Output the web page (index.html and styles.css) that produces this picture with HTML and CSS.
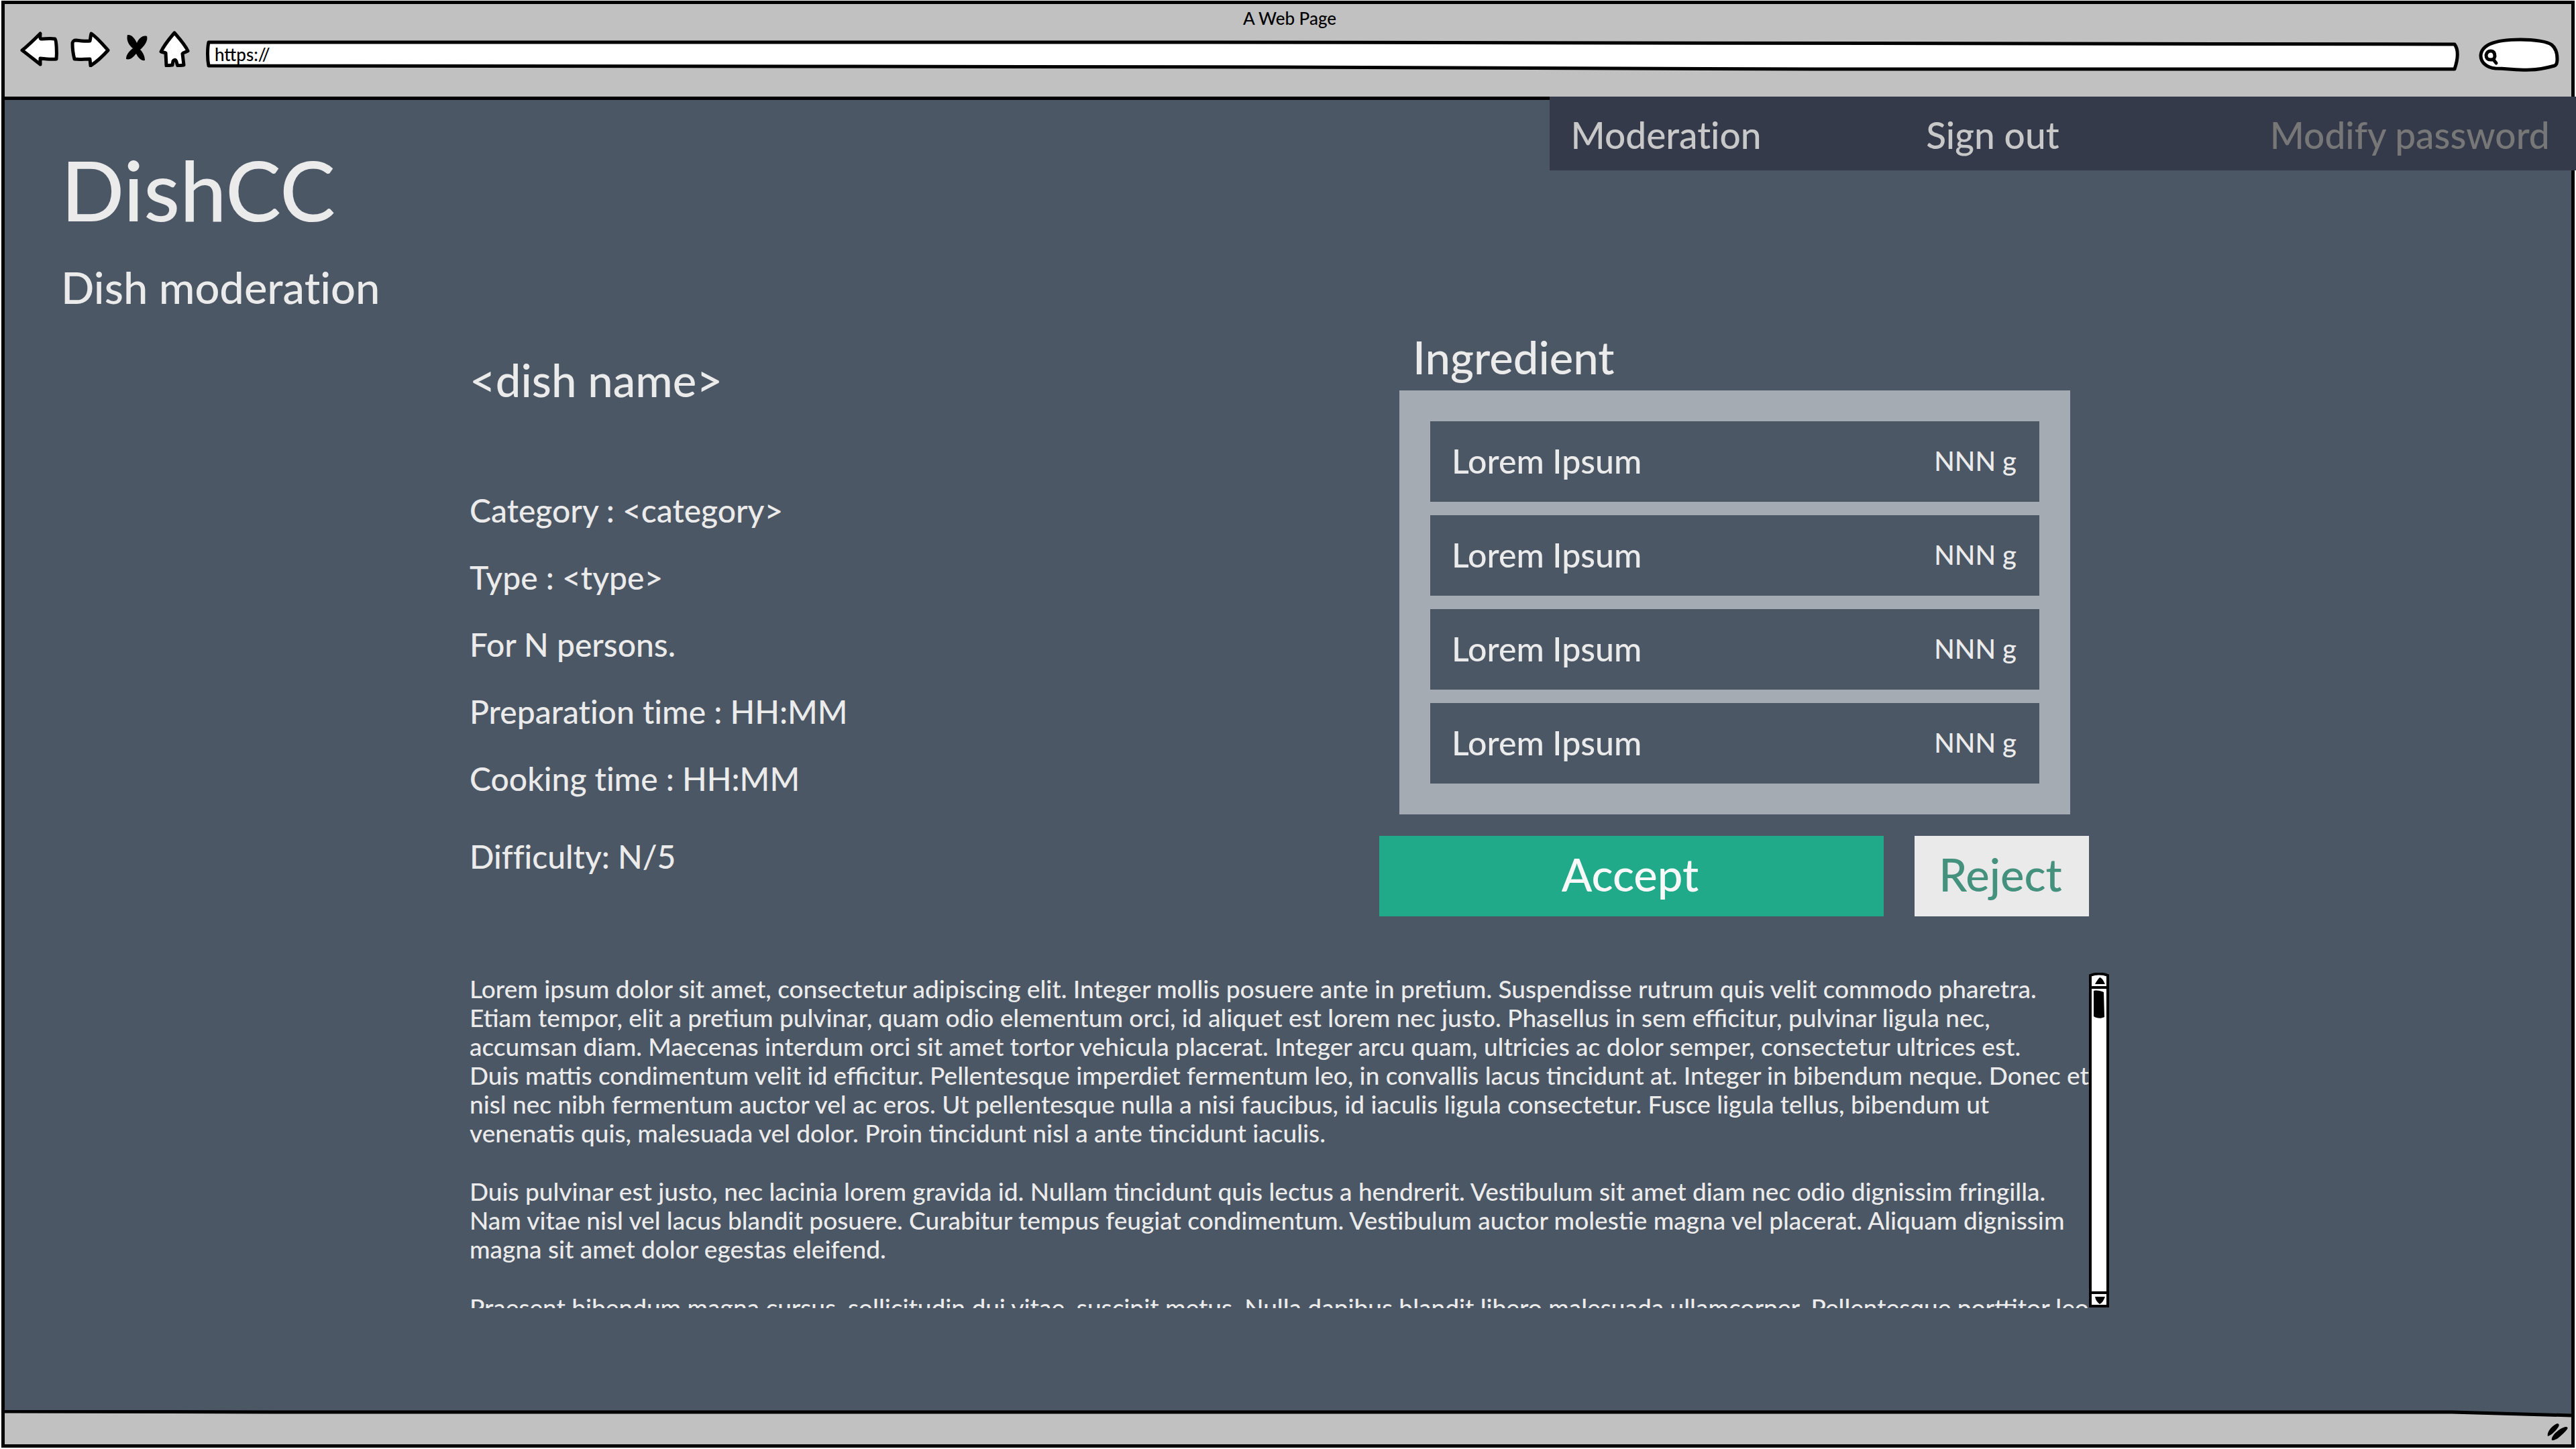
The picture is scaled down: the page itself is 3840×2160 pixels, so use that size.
FILE: index.html
```html
<!DOCTYPE html>
<html lang="en">
<head>
<meta charset="utf-8">
<title>DishCC - Dish moderation</title>
<link rel="stylesheet" href="styles.css">
</head>
<body>
<div class="frame">
  <header class="chrome">
    <div class="chrome-title">A Web Page</div>
    <div class="toolbar">
      <button class="tool" type="button" aria-label="Back">
        <svg width="60" height="54" viewBox="29 46 60 54"><path class="ink" d="M33 75C42 68 52 58 60 50C60 53 59 57 61 58C68 58 75 57 82 58C84 60 85 78 84 88C77 89 68 88 60 87L60 96C51 89 40 80 33 75Z"/></svg>
      </button>
      <button class="tool" type="button" aria-label="Forward">
        <svg width="60" height="54" viewBox="105 46 60 54"><path class="ink" d="M108 64C109 61 110 60 113 60C120 61 128 62 134 61C135 58 135 53 136 50C145 56 154 67 161 75C153 84 144 92 135 98L134 88C126 88 118 89 111 88C109 81 108 73 108 64Z"/></svg>
      </button>
      <button class="tool" type="button" aria-label="Stop">
        <svg width="39" height="54" viewBox="181 46 39 54"><path d="M190 52C196 51 201 57 204 64C207 57 213 52 219 54C221 61 215 69 209 74C213 78 216 84 216 90C210 91 206 86 203 80C199 85 194 90 188 88C188 81 193 76 198 72C192 67 188 60 190 52Z"/></svg>
      </button>
      <button class="tool" type="button" aria-label="Home">
        <svg width="54" height="54" viewBox="236 46 54 54"><path class="ink" d="M260 49C266 56 276 67 280 76C277 78 273 78 272 80L274 97L265 98C263 95 264 92 262 90C261 89 259 89 258 91L257 97L248 98L247 79C245 78 241 78 240 77C245 67 253 57 260 49Z"/></svg>
      </button>
      <div class="address">
        <svg class="address-box" viewBox="0 0 3362 50" preserveAspectRatio="none" aria-hidden="true"><path class="ink" d="M5 5H1500L3353 8C3359 16 3358 30 3353 45H2400L1600 42L900 41L5 40C3 30 3 14 5 5Z"/></svg>
        <input class="address-input" type="text" value="https://" aria-label="Address">
      </div>
      <button class="tool search" type="button" aria-label="Search">
        <svg width="122" height="54" viewBox="3694 54 122 54"><path class="ink" d="M3698 83C3699 64 3727 59 3757 59C3778 59 3798 62 3804 67C3810 72 3812 80 3812 88C3812 92 3811 97 3808 98C3797 101 3785 104 3772 104C3756 105 3738 102 3720 102C3707 101 3698 93 3698 83Z"/><path class="ink" d="M3713 76C3718 76 3719 80 3719 84C3718 88 3717 89 3713 89C3708 89 3706 87 3706 82C3707 78 3709 76 3713 76ZM3717 89L3721 94"/></svg>
      </button>
    </div>
  </header>

  <main class="page">
    <div class="topbar">
      <div class="brand">
        <h1 class="brand-name">DishCC</h1>
        <h2 class="section-title">Dish moderation</h2>
      </div>
      <nav class="menu">
        <a class="menu-link" href="#">Moderation</a>
        <a class="menu-link" href="#">Sign out</a>
        <a class="menu-link menu-link-off" href="#" aria-disabled="true">Modify password</a>
      </nav>
    </div>

    <div class="content">
      <div class="overview">
        <section class="details">
          <h3 class="heading dish-name">&lt;dish name&gt;</h3>
          <ul class="facts">
            <li>Category : &lt;category&gt;</li>
            <li>Type : &lt;type&gt;</li>
            <li>For N persons.</li>
            <li>Preparation time : HH:MM</li>
            <li>Cooking time : HH:MM</li>
            <li class="difficulty">Difficulty: N/5</li>
          </ul>
        </section>
        <section class="side">
          <h3 class="heading side-title">Ingredient</h3>
          <ul class="ingredients">
            <li class="ingredient"><span>Lorem Ipsum</span><span class="amount">NNN g</span></li>
            <li class="ingredient"><span>Lorem Ipsum</span><span class="amount">NNN g</span></li>
            <li class="ingredient"><span>Lorem Ipsum</span><span class="amount">NNN g</span></li>
            <li class="ingredient"><span>Lorem Ipsum</span><span class="amount">NNN g</span></li>
          </ul>
          <div class="actions">
            <button class="action accept" type="button">Accept</button>
            <button class="action reject" type="button">Reject</button>
          </div>
        </section>
      </div>

      <section class="description">
        <div class="description-text">
          <p>Lorem ipsum dolor sit amet, consectetur adipiscing elit. Integer mollis posuere ante in pretium. Suspendisse rutrum quis velit commodo pharetra.<br>Etiam tempor, elit a pretium pulvinar, quam odio elementum orci, id aliquet est lorem nec justo. Phasellus in sem efficitur, pulvinar ligula nec,<br>accumsan diam. Maecenas interdum orci sit amet tortor vehicula placerat. Integer arcu quam, ultricies ac dolor semper, consectetur ultrices est.<br>Duis mattis condimentum velit id efficitur. Pellentesque imperdiet fermentum leo, in convallis lacus tincidunt at. Integer in bibendum neque. Donec et<br>nisl nec nibh fermentum auctor vel ac eros. Ut pellentesque nulla a nisi faucibus, id iaculis ligula consectetur. Fusce ligula tellus, bibendum ut<br>venenatis quis, malesuada vel dolor. Proin tincidunt nisl a ante tincidunt iaculis.</p>
          <p>Duis pulvinar est justo, nec lacinia lorem gravida id. Nullam tincidunt quis lectus a hendrerit. Vestibulum sit amet diam nec odio dignissim fringilla.<br>Nam vitae nisl vel lacus blandit posuere. Curabitur tempus feugiat condimentum. Vestibulum auctor molestie magna vel placerat. Aliquam dignissim<br>magna sit amet dolor egestas eleifend.</p>
          <p>Praesent bibendum magna cursus, sollicitudin dui vitae, suscipit metus. Nulla dapibus blandit libero malesuada ullamcorper. Pellentesque porttitor leo</p>
        </div>
        <svg class="scrollbar" width="30" height="500" viewBox="0 0 30 500" aria-hidden="true">
          <path fill="#fff" stroke="#000" stroke-width="4" d="M2 4C10 1 20 1 28 4V497H2ZM2 22H28M2 477H28"/>
          <path d="M9 17C11 13 13 10 16 7C20 8 22 13 24 17ZM7 27C12 26 18 27 22 29L23 66C18 69 11 68 7 65ZM9 483H24C22 488 20 492 16 494C12 491 10 488 9 483Z"/>
        </svg>
      </section>
    </div>
  </main>

  <footer class="statusbar">
    <svg class="statusbar-edge" viewBox="0 0 3826 51" preserveAspectRatio="none" aria-hidden="true"><path fill="#c1c1c1" d="M0 3L400 4L3648 3L3826 8V51H0Z"/><path fill="none" stroke="#000" stroke-width="5" d="M0 2L400 3H3648L3826 8"/></svg>
    <svg class="grip" width="32" height="27" viewBox="3797 2122 32 27" aria-hidden="true"><path d="M3798 2141C3796 2135 3804 2125 3812 2122C3818 2123 3813 2129 3808 2134C3804 2138 3801 2140 3798 2141ZM3804 2147C3802 2141 3815 2129 3824 2127C3830 2127 3828 2130 3822 2136C3816 2142 3809 2148 3804 2147Z"/></svg>
  </footer>
</div>
</body>
</html>
```
FILE: styles.css
```css
* { box-sizing: border-box; }

body {
  margin: 0;
  padding: 1px 2px 2px;
  min-height: 100vh;
  display: flex;
  background: #fff;
  color: #ebebeb;
  font-family: Lato, "Open Sans", sans-serif;
  font-weight: 500;
  font-variant-ligatures: none;
}

h1, h2, h3, p, ul { margin: 0; padding: 0; font-weight: 500; }
ul { list-style: none; }
svg { display: block; }
button { font: inherit; cursor: pointer; }

.frame {
  flex: 1;
  min-width: 0;
  display: flex;
  flex-direction: column;
  border: 5px solid #000;
  background: #4b5764;
}

.ink {
  fill: #fff;
  stroke: #000;
  stroke-width: 5;
  stroke-linejoin: round;
  stroke-linecap: round;
}

/* Browser chrome */
.chrome {
  background: #c1c1c1;
  color: #000;
  padding: 4px 17px 36px 22px;
}
.chrome-title {
  text-align: center;
  font-size: 26px;
  line-height: 34px;
}
.toolbar {
  display: flex;
  align-items: flex-start;
  gap: 16px;
  margin-top: 2px;
}
.tool { padding: 0; border: 0; background: none; }
.search { margin: 8px 0 0 10px; }
.address {
  flex: 1;
  position: relative;
  height: 50px;
  margin-top: 12px;
}
.address-box { width: 100%; height: 50px; }
.address-input {
  position: absolute;
  inset: 8px 16px 12px 10px;
  padding: 0 4px;
  border: 0;
  background: none;
  color: #000;
  font: 500 26px/30px Lato, "Open Sans", sans-serif;
}

/* Page */
.page {
  flex: 1;
  border-top: 5px solid #000;
}
.topbar {
  display: flex;
  justify-content: space-between;
  align-items: flex-start;
}
.brand { padding: 61px 0 0 84px; }
.brand-name { font-size: 124px; line-height: 144px; }
.section-title { margin-top: 34px; font-size: 65px; line-height: 80px; }

.menu {
  width: 40%;
  height: 110px;
  margin: -5px -7px 0 0;
  padding: 4px 0 0 32px;
  display: grid;
  grid-template-columns: 528fr 511fr 455fr;
  align-items: center;
  background: #343a4a;
  position: relative;
}
.menu-link {
  color: #c8c8c8;
  font-size: 55px;
  line-height: 68px;
  text-decoration: none;
}
.menu-link-off { color: #777; }

.content {
  max-width: 2448px;
  margin: 0 auto;
  padding: 24px 0 32px;
}
.overview {
  display: flex;
  justify-content: space-between;
  padding: 0 30px 0 4px;
}
.heading { font-size: 67px; line-height: 80px; }
.dish-name { margin-top: 34px; }
.facts {
  margin-top: 125px;
  display: flex;
  flex-direction: column;
  gap: 40px;
  font-size: 48px;
  line-height: 60px;
}
.difficulty { margin-top: 16px; }

.side { width: 1058px; }
.side-title { padding-left: 50px; }
.ingredients {
  margin: 10px 28px 32px 30px;
  padding: 46px;
  display: flex;
  flex-direction: column;
  gap: 20px;
  background: #a4abb2;
}
.ingredient {
  height: 120px;
  padding: 0 34px 2px 32px;
  display: flex;
  justify-content: space-between;
  align-items: center;
  background: #4b5764;
  font-size: 50px;
}
.amount { font-size: 40px; }

.actions { display: flex; gap: 46px; }
.action {
  height: 120px;
  padding: 0 4px 6px 0;
  border: 0;
  font-size: 67px;
}
.accept { flex: 1; background: #20aa89; color: #f8f8f8; }
.reject { width: 260px; background: #eaeaea; color: #44917d; }

.description {
  display: flex;
  height: 500px;
  margin-top: 84px;
  padding-left: 4px;
}
.description-text {
  flex: 1;
  min-width: 0;
  padding-top: 2px;
  overflow: hidden;
  white-space: nowrap;
  font-size: 37px;
  line-height: 43px;
  font-variant-ligatures: common-ligatures;
}
.description-text p + p { margin-top: 44px; }
.scrollbar { flex: none; }

/* Status bar */
.statusbar { position: relative; height: 51px; }
.statusbar-edge { width: 100%; height: 51px; }
.grip { position: absolute; right: 4px; bottom: 4px; }
```
